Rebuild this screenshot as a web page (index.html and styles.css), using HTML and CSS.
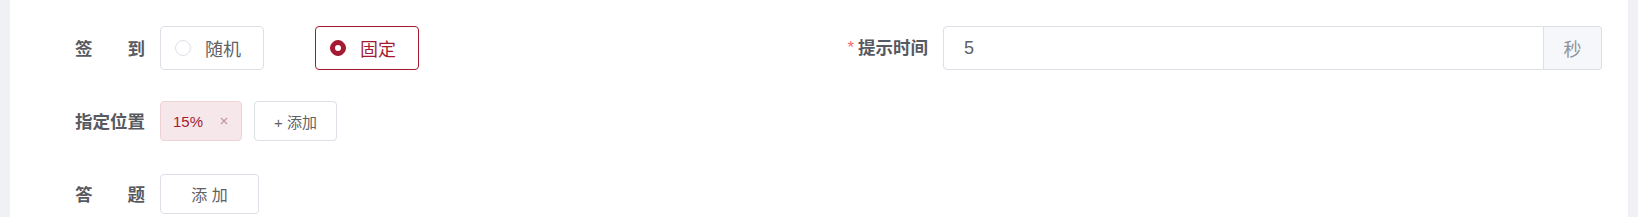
FILE: index.html
```html
<!DOCTYPE html>
<html lang="zh-CN">
<head>
    <meta charset="UTF-8">
    <meta name="viewport" content="width=device-width, initial-scale=1.0">
    <title>签到设置</title>
    <link rel="stylesheet" href="styles.css">
</head>
<body>

    <div class="card">
        <!-- 第一行：签到方式 + 提示时间 -->
        <div class="form-row two-col">
            <div class="form-item">
                <label class="form-label"><span class="justify">签到</span></label>
                <div class="form-content">
                    <div class="radio-box">
                        <span class="radio-dot"></span>
                        <span class="radio-text">随机</span>
                    </div>
                    <div class="radio-box checked">
                        <span class="radio-dot"></span>
                        <span class="radio-text">固定</span>
                    </div>
                </div>
            </div>
            <div class="form-item">
                <label class="form-label"><span class="required">*</span>提示时间</label>
                <div class="form-content">
                    <div class="input-group">
                        <input type="text" class="input" value="5">
                        <span class="input-append">秒</span>
                    </div>
                </div>
            </div>
        </div>

        <!-- 指定位置 -->
        <div class="form-row">
            <div class="form-item">
                <label class="form-label">指定位置</label>
                <div class="form-content">
                    <span class="tag">15%
                        <svg class="tag-close" width="8" height="8" viewBox="0 0 8 8">
                            <path d="M1 1L7 7M7 1L1 7" stroke="#c3959c" stroke-width="1.1" fill="none"/>
                        </svg>
                    </span>
                    <button class="btn btn-small">+ 添加</button>
                </div>
            </div>
        </div>

        <!-- 答题 -->
        <div class="form-row">
            <div class="form-item">
                <label class="form-label"><span class="justify">答题</span></label>
                <div class="form-content">
                    <button class="btn btn-wide">添 加</button>
                </div>
            </div>
        </div>
    </div>

</body>
</html>
```

FILE: styles.css
```css
body {
    margin: 0;
    padding: 0 10px;
    height: 217px;
    overflow: hidden;
    background-color: #f0f1f5;
    font-family: "Noto Sans CJK SC", "Liberation Sans", sans-serif;
}
.card {
    background-color: #fff;
    height: 217px;
    padding: 26px 26px 0 26px;
    box-sizing: border-box;
}
.form-row {
    margin-bottom: 29px;
}
.two-col {
    display: grid;
    grid-template-columns: 1fr 1fr;
}
.form-item {
    display: flex;
    align-items: center;
    height: 44px;
}
.form-label {
    width: 124px;
    flex: none;
    box-sizing: border-box;
    padding-right: 15px;
    text-align: right;
    font-size: 17.5px;
    font-weight: bold;
    color: #575a60;
    line-height: 44px;
}
.justify {
    display: inline-block;
    width: 70px;
    text-align: justify;
    text-align-last: justify;
    vertical-align: top;
}
.required {
    color: #f56c6c;
    font-family: "Liberation Sans", sans-serif;
    font-size: 17px;
    font-weight: normal;
    margin-right: 4px;
    position: relative;
    top: -1px;
}
.form-content {
    flex: 1;
    display: flex;
    align-items: center;
    height: 44px;
}
.radio-box {
    display: flex;
    align-items: center;
    height: 44px;
    box-sizing: border-box;
    padding: 0 22px 0 14px;
    border: 1px solid #dcdfe6;
    border-radius: 4px;
    margin-right: 51px;
    cursor: pointer;
}
.radio-dot {
    width: 16px;
    height: 16px;
    box-sizing: border-box;
    border: 1px solid #dcdfe6;
    border-radius: 50%;
    background-color: #fff;
    margin-right: 14px;
    position: relative;
}
.radio-text {
    font-size: 18px;
    color: #606266;
}
.radio-box.checked {
    border-color: #a41b31;
}
.radio-box.checked .radio-dot {
    border-color: #a41b31;
    background-color: #a41b31;
}
.radio-box.checked .radio-dot::after {
    content: "";
    position: absolute;
    left: 4px;
    top: 4px;
    width: 6px;
    height: 6px;
    border-radius: 50%;
    background-color: #fff;
}
.radio-box.checked .radio-text {
    color: #a41b31;
}
.input-group {
    flex: 1;
    display: flex;
    height: 44px;
}
.input {
    flex: 1;
    min-width: 0;
    height: 44px;
    box-sizing: border-box;
    border: 1px solid #dcdfe6;
    border-radius: 4px 0 0 4px;
    padding: 0 20px;
    font-family: "Liberation Sans", sans-serif;
    font-size: 18px;
    color: #606266;
    outline: none;
}
.input-append {
    width: 58px;
    flex: none;
    box-sizing: border-box;
    border: 1px solid #dcdfe6;
    border-left: none;
    border-radius: 0 4px 4px 0;
    background-color: #f5f7fa;
    color: #909399;
    font-size: 18px;
    display: flex;
    align-items: center;
    justify-content: center;
}
.tag {
    display: inline-flex;
    align-items: center;
    height: 40px;
    box-sizing: border-box;
    padding: 0 13px 0 12px;
    background-color: #f6e8ea;
    border: 1px solid #eed2d6;
    border-radius: 4px;
    color: #a41b31;
    font-family: "Liberation Sans", sans-serif;
    font-size: 15px;
    margin-right: 12px;
}
.tag-close {
    margin-left: 17px;
}
.btn {
    height: 40px;
    box-sizing: border-box;
    background-color: #fff;
    border: 1px solid #dcdfe6;
    border-radius: 4px;
    color: #606266;
    font-family: "Liberation Sans", "Noto Sans CJK SC", sans-serif;
    cursor: pointer;
    padding: 0;
}
.btn-small {
    width: 83px;
    font-size: 15px;
}
.btn-wide {
    width: 99px;
    font-size: 16px;
}
```
